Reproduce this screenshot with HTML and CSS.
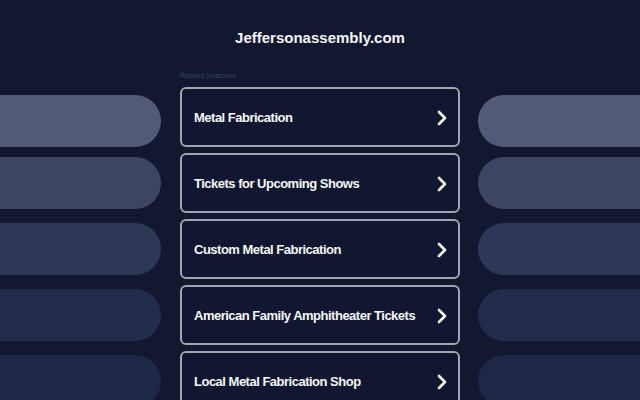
FILE: index.html
```html
<!DOCTYPE html>
<html>
<head>
<meta charset="utf-8">
<link rel="stylesheet" href="styles.css">
</head>
<body>
<header class="header">
  <h1 class="title">Jeffersonassembly.com</h1>
</header>
<main class="row">
  <div class="side side-left">
    <div class="pill p1"></div>
    <div class="pill p2"></div>
    <div class="pill p3"></div>
    <div class="pill p4"></div>
    <div class="pill p5"></div>
  </div>
  <div class="center">
    <div class="related">Related Searches</div>
    <a class="card" href="#"><span class="label">Metal Fabrication</span><svg class="chev" width="12" height="16" viewBox="0 0 12 16"><path d="M3 2 L9 8 L3 14" fill="none" stroke="#fff" stroke-width="2.6" stroke-linecap="round" stroke-linejoin="round"/></svg></a>
    <a class="card" href="#"><span class="label">Tickets for Upcoming Shows</span><svg class="chev" width="12" height="16" viewBox="0 0 12 16"><path d="M3 2 L9 8 L3 14" fill="none" stroke="#fff" stroke-width="2.6" stroke-linecap="round" stroke-linejoin="round"/></svg></a>
    <a class="card" href="#"><span class="label">Custom Metal Fabrication</span><svg class="chev" width="12" height="16" viewBox="0 0 12 16"><path d="M3 2 L9 8 L3 14" fill="none" stroke="#fff" stroke-width="2.6" stroke-linecap="round" stroke-linejoin="round"/></svg></a>
    <a class="card" href="#"><span class="label">American Family Amphitheater Tickets</span><svg class="chev" width="12" height="16" viewBox="0 0 12 16"><path d="M3 2 L9 8 L3 14" fill="none" stroke="#fff" stroke-width="2.6" stroke-linecap="round" stroke-linejoin="round"/></svg></a>
    <a class="card" href="#"><span class="label">Local Metal Fabrication Shop</span><svg class="chev" width="12" height="16" viewBox="0 0 12 16"><path d="M3 2 L9 8 L3 14" fill="none" stroke="#fff" stroke-width="2.6" stroke-linecap="round" stroke-linejoin="round"/></svg></a>
  </div>
  <div class="side side-right">
    <div class="pill p1"></div>
    <div class="pill p2"></div>
    <div class="pill p3"></div>
    <div class="pill p4"></div>
    <div class="pill p5"></div>
  </div>
</main>
</body>
</html>
```
FILE: styles.css
```css
html, body {
  margin: 0;
  padding: 0;
  height: 100%;
  overflow: hidden;
}
body {
  background: #111830;
  font-family: "Liberation Sans", Arial, sans-serif;
  color: #fff;
}
.header {
  display: flex;
  justify-content: center;
  padding-top: 29px;
}
.title {
  margin: 0;
  font-size: 15px;
  line-height: 18px;
  font-weight: bold;
  color: #f4f5f8;
}
.row {
  display: flex;
  margin-top: 23px;
}
.side {
  display: flex;
  flex-direction: column;
  flex: none;
}
.side-left {
  width: 161px;
  margin-right: 19px;
}
.side-right {
  width: 162px;
  margin-left: 18px;
}
.pill {
  height: 52px;
  width: 100%;
  flex: none;
  margin-top: 14px;
}
.side-left .pill { border-radius: 0 26px 26px 0; }
.side-right .pill { border-radius: 26px 0 0 26px; }
.pill.p1 { margin-top: 25px; background: #525a78; }
.pill.p2 { margin-top: 10px; background: #3d4563; }
.pill.p3 { background: #2f3757; }
.pill.p4 { background: #242c4c; }
.pill.p5 { background: #1f2746; }
.center {
  width: 280px;
  flex: none;
  display: flex;
  flex-direction: column;
}
.related {
  font-size: 7px;
  line-height: 10px;
  color: #3b4361;
  margin-top: 1px;
  margin-bottom: 6px;
}
.card {
  box-sizing: border-box;
  height: 60px;
  margin-bottom: 6px;
  border: 2px solid #a1a5b1;
  border-radius: 6px;
  background: #111730;
  display: flex;
  align-items: center;
  justify-content: space-between;
  padding: 1px 10px 0 12px;
  text-decoration: none;
  color: #fff;
}
.label {
  font-size: 13px;
  letter-spacing: -0.5px;
  font-weight: bold;
  color: #f6f7f9;
}
.chev {
  display: block;
  flex: none;
}
```
